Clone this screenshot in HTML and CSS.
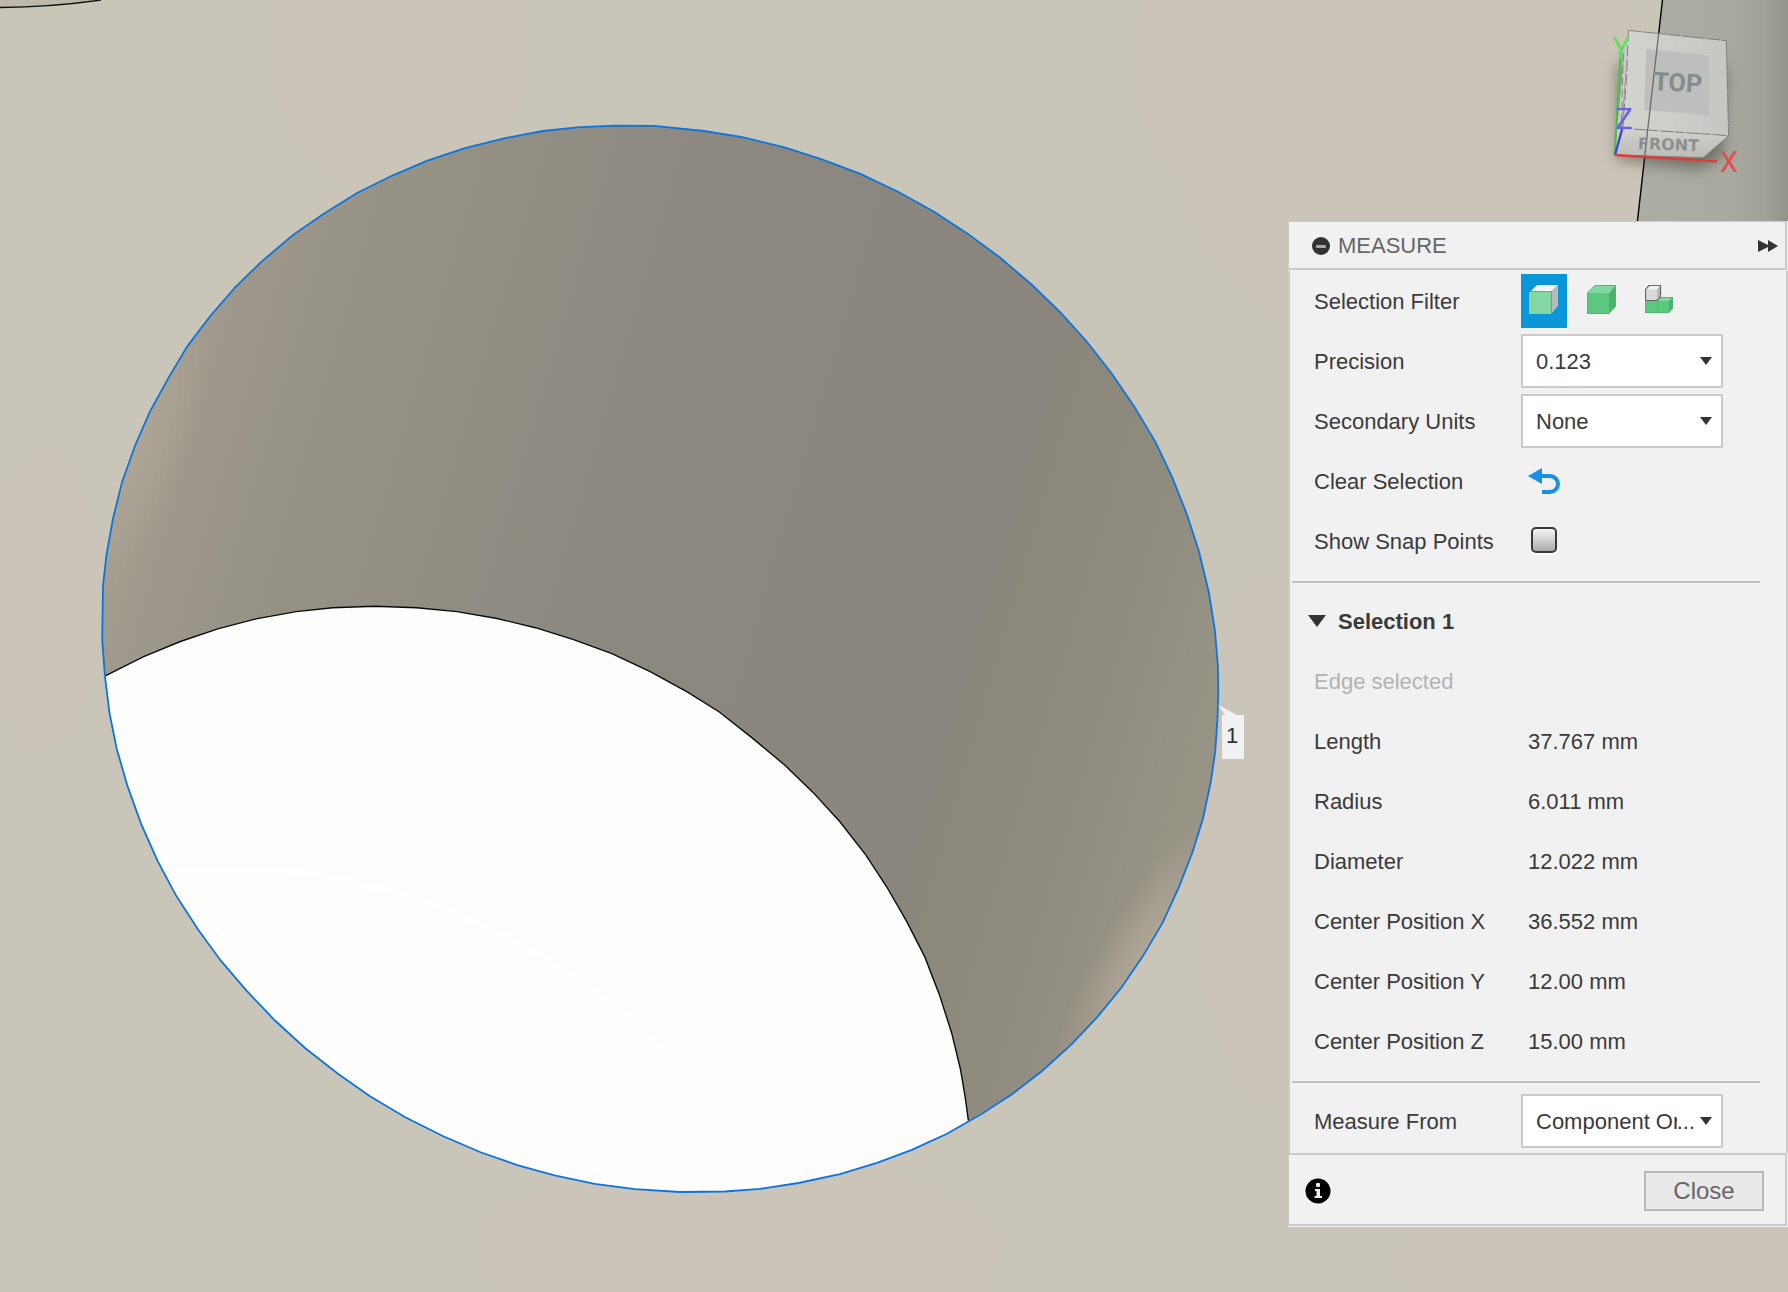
FILE: index.html
```html
<!DOCTYPE html>
<html lang="en">
<head>
<meta charset="utf-8">
<meta name="viewport" content="width=device-width, initial-scale=1">
<title>Measure</title>
<link rel="stylesheet" href="styles.css">
</head>
<body>
<main class="viewport">
  <svg class="scene" viewBox="0 0 1788 1292" preserveAspectRatio="xMaxYMin slice" role="img" aria-label="Model view with the selected hole edge">
    <defs>
      <linearGradient id="shade" gradientUnits="userSpaceOnUse" x1="250" y1="70" x2="1304" y2="377">
        <stop offset="0" stop-color="#a39d8f"/>
        <stop offset=".05" stop-color="#9d988b"/>
        <stop offset=".13" stop-color="#979386"/>
        <stop offset=".26" stop-color="#928e83"/>
        <stop offset=".42" stop-color="#8d8981"/>
        <stop offset=".6" stop-color="#8b877e"/>
        <stop offset=".78" stop-color="#8b867d"/>
        <stop offset=".82" stop-color="#8c887b"/>
        <stop offset=".92" stop-color="#908c7f"/>
        <stop offset="1" stop-color="#979385"/>
      </linearGradient>
      <linearGradient id="sideFace" x1="0" y1="0" x2="1" y2="0">
        <stop offset="0" stop-color="#acada4"/>
        <stop offset=".6" stop-color="#a9aaa1"/>
        <stop offset=".85" stop-color="#a2a299"/>
        <stop offset="1" stop-color="#93938b"/>
      </linearGradient>
      <radialGradient id="warm">
        <stop offset="0" stop-color="#ccc4b8"/>
        <stop offset=".6" stop-color="#ccc4b8" stop-opacity=".9"/>
        <stop offset="1" stop-color="#ccc4b8" stop-opacity="0"/>
      </radialGradient>
      <radialGradient id="glow">
        <stop offset="0" stop-color="#b5a999"/>
        <stop offset="1" stop-color="#b5a999" stop-opacity="0"/>
      </radialGradient>
      <clipPath id="rimClip">
        <path d="M104.900 675.900L102.200 639.600L103 586L106.400 555.400L112.900 519L122.100 481.900L135.100 445.500L150.400 410.700L168.800 377.400L187.500 346.100L210.100 316.200L235.400 287.100L262.100 261.100L292.800 235.100L323.400 214L357 193L391.900 175.800L426.700 160.800L465 148.200L504 138.300L543 131L579.800 127.200L615.700 125.600L654 125.800L704 131L742.300 137.100L784.400 147.400L822.600 159.700L860.900 174.200L898 191.800L933.600 211.400L968 233.900L1000.600 258L1032.300 285.200L1059.900 312L1086.700 341.500L1111.500 373.200L1134.500 406.900L1155.500 442.100L1172 476.900L1186.500 513.300L1198.800 550.800L1208.700 591.700L1214.900 630L1217.900 666.300L1218.300 692L1217.500 718.900L1215.200 751.400L1211 780.900L1203 818.400L1192.300 852.800L1178.900 887.200L1162.400 923.200L1142.900 956.100L1121.500 987.500L1097 1017.400L1071.700 1044.100L1042.700 1070.500L1012 1094.300L968.400 1120.700L965 1095.800L960.400 1069L951.600 1032.700L939.300 994.400L924.800 956.900L906.800 921.700L886.500 886.500L865.900 855.100L839.900 821.800L813 792.400L784.400 764.800L751.800 737.600L719.300 712L687.600 692.100L650.200 671.700L611.900 653.700L573.600 639.600L535.400 627.700L497.100 618.500L456.900 611.600L416.700 607.800L374.700 606.300L332.600 607.800L296.200 611.600L256 618.900L217.800 628.800L180.300 641.500L143.100 656.800Z"/>
      </clipPath>
    </defs>

    <rect width="1788" height="1292" fill="#c9c5b8"/>
    <g fill="url(#warm)">
      <ellipse cx="400" cy="50" rx="150" ry="170"/>
      <ellipse cx="1240" cy="60" rx="120" ry="160"/>
      <ellipse cx="1440" cy="150" rx="300" ry="240"/>
      <ellipse cx="40" cy="600" rx="70" ry="170"/>
      <ellipse cx="1270" cy="840" rx="90" ry="300"/>
      <ellipse cx="740" cy="1250" rx="300" ry="110"/>
      <ellipse cx="1640" cy="1262" rx="280" ry="90"/>
    </g>

    <path d="M1662 0L1628 300H1788V0Z" fill="url(#sideFace)"/>
    <path d="M1662.500 0L1628.500 300" fill="none" stroke="#000" stroke-width="1.400"/>
    <path d="M0 7.500Q52 7 101 0H0Z" fill="#bdb8ab"/>
    <path d="M0 7.500Q52 7 101 0" fill="none" stroke="#111" stroke-width="1.400"/>

    <g clip-path="url(#rimClip)">
      <rect x="90" y="110" width="1140" height="1100" fill="url(#shade)"/>
      <ellipse cx="1146" cy="954" rx="46" ry="170" transform="rotate(31 1146 954)" fill="url(#glow)" opacity=".9"/>
      <ellipse cx="140" cy="450" rx="46" ry="170" transform="rotate(20 140 450)" fill="url(#glow)" opacity=".6"/>
    </g>

    <path fill="#fdfdfb" d="M105.300 675.900L143.100 656.800L180.300 641.500L217.800 628.800L256 618.900L296.200 611.600L332.600 607.800L374.700 606.300L416.700 607.800L456.900 611.600L497.100 618.500L535.400 627.700L573.600 639.600L611.900 653.700L650.200 671.700L687.600 692.100L719.300 712L751.800 737.600L784.400 764.800L813 792.400L839.900 821.800L865.900 855.100L886.500 886.500L906.800 921.700L924.800 956.900L939.300 994.400L951.600 1032.700L960.400 1069L965 1095.800L968.400 1120.700L947 1133.700L911.800 1149.800L877 1162.800L839.900 1174.200L798.500 1183L760.300 1188.800L725 1191.500L680 1192L634.900 1189.200L594.700 1183.800L554.500 1175.400L518.100 1165.400L479.900 1152L442.800 1136L405.300 1117.200L370 1096.200L338.300 1074L305 1048L274.400 1020L246.500 990.600L220.800 960.700L197.900 929.300L175.700 894.900L157.700 861.200L141.200 824.100L127.400 785.800L116.700 748.700L109.500 713.100Z"/>
    <path fill="#fffefd" d="M175.700 870Q330 850 500 930Q690 1030 770 1186L725 1191.500L680 1192L594.700 1183.800L518.100 1165.400L442.800 1136L370 1096.200L305 1048L246.500 990.600L197.900 929.300Z"/>
    <path fill="none" stroke="#0b0b0b" stroke-width="1.400" d="M105.300 675.900L143.100 656.800L180.300 641.500L217.800 628.800L256 618.900L296.200 611.600L332.600 607.800L374.700 606.300L416.700 607.800L456.900 611.600L497.100 618.500L535.400 627.700L573.600 639.600L611.900 653.700L650.200 671.700L687.600 692.100L719.300 712L751.800 737.600L784.400 764.800L813 792.400L839.900 821.800L865.900 855.100L886.500 886.500L906.800 921.700L924.800 956.900L939.300 994.400L951.600 1032.700L960.400 1069L965 1095.800L968.400 1120.700"/>

    <path fill="none" stroke="#0b74de" stroke-width="1.800" d="M104.900 675.900L102.200 639.600L103 586L106.400 555.400L112.900 519L122.100 481.900L135.100 445.500L150.400 410.700L168.800 377.400L187.500 346.100L210.100 316.200L235.400 287.100L262.100 261.100L292.800 235.100L323.400 214L357 193L391.900 175.800L426.700 160.800L465 148.200L504 138.300L543 131L579.800 127.200L615.700 125.600L654 125.800L704 131L742.300 137.100L784.400 147.400L822.600 159.700L860.900 174.200L898 191.800L933.600 211.400L968 233.900L1000.600 258L1032.300 285.200L1059.900 312L1086.700 341.500L1111.500 373.200L1134.500 406.900L1155.500 442.100L1172 476.900L1186.500 513.300L1198.800 550.800L1208.700 591.700L1214.900 630L1217.900 666.300L1218.300 692L1217.500 718.900L1215.200 751.400L1211 780.900L1203 818.400L1192.300 852.800L1178.900 887.200L1162.400 923.200L1142.900 956.100L1121.500 987.500L1097 1017.400L1071.700 1044.100L1042.700 1070.500L1012 1094.300L980.700 1114.500L947 1133.700L911.800 1149.800L877 1162.800L839.900 1174.200L798.500 1183L760.300 1188.800L725 1191.500L680 1192L634.900 1189.200L594.700 1183.800L554.500 1175.400L518.100 1165.400L479.900 1152L442.800 1136L405.300 1117.200L370 1096.200L338.300 1074L305 1048L274.400 1020L246.500 990.600L220.800 960.700L197.900 929.300L175.700 894.900L157.700 861.200L141.200 824.100L127.400 785.800L116.700 748.700L109.500 713.100Z"/>

    <path d="M1218 705L1239 716H1226Z" fill="#f1f1f1"/>
    <rect x="1222" y="715" width="22" height="44" fill="#f1f1f1"/>
    <text class="marker" x="1232" y="743" text-anchor="middle">1</text>
  </svg>

  <svg class="cube" viewBox="0 0 684 663" role="img" aria-label="View cube">
    <defs>
      <filter id="soft" x="-30%" y="-30%" width="160%" height="160%"><feGaussianBlur stdDeviation="20"/></filter>
      <linearGradient id="frontFace" x1="0" y1="0" x2="0" y2="1">
        <stop offset="0" stop-color="#d2d2ce"/>
        <stop offset="1" stop-color="#bcbcb6"/>
      </linearGradient>
      <linearGradient id="topFace" x1="0" y1="0" x2="1" y2="0">
        <stop offset="0" stop-color="#d3d3cf"/>
        <stop offset="1" stop-color="#c6c7c3"/>
      </linearGradient>
    </defs>
    <path d="M170 190L500 200L490 470L420 510L170 480Z" fill="#3c3c36" opacity=".5" filter="url(#soft)"/>
    <path d="M205 91L185 385L165 465L190 190Z" fill="#cdcdc8"/>
    <path d="M205 91L499 122L506 407L188 385Z" fill="url(#topFace)"/>
    <path d="M188 385L506 407L430 473L165 465Z" fill="url(#frontFace)"/>
    <path d="M259 148L447 166L449 346L253 330Z" fill="#bcbfbc"/>
    <path d="M296 100L254 470" fill="none" stroke="#6d6d6a" stroke-width="4"/>
    <g fill="none" stroke="#80817d" stroke-width="3">
      <path d="M205 91L499 122" stroke-dasharray="40 4 70 4"/>
      <path d="M499 122L506 407" stroke-dasharray="90 3 60 4"/>
      <path d="M188 385L506 407" stroke-dasharray="26 8 40 5"/>
      <path d="M506 407L430 473L165 465"/>
      <path d="M205 91L200 230L188 385" stroke-dasharray="34 10"/>
      <path d="M190 160L184 385" stroke-dasharray="24 12"/>
    </g>
    <text class="cube-top" x="352" y="274" text-anchor="middle" transform="rotate(3 352 274)">TOP</text>
    <text class="cube-front" x="325" y="450" text-anchor="middle" transform="rotate(2 325 450)">FRONT</text>
    <path d="M183 145L164 465" stroke="#45c04a" stroke-width="6"/>
    <path d="M187 385L165 465" stroke="#4444c8" stroke-width="7"/>
    <path d="M165 465L472 484" stroke="#df3b38" stroke-width="7"/>
    <text class="axis axis-y" x="183" y="174" text-anchor="middle">Y</text>
    <text class="axis axis-z" x="192" y="388" text-anchor="middle">Z</text>
    <text class="axis axis-x" x="507" y="517" text-anchor="middle">X</text>
  </svg>

  <section class="panel" aria-labelledby="panel-title">
    <header class="panel-head">
      <button class="icon-button" type="button" aria-label="Collapse">
        <svg width="20" height="20" viewBox="0 0 20 20"><circle cx="10" cy="10" r="9" fill="#333"/><rect x="5" y="9" width="10" height="3" rx="1" fill="#aaa"/></svg>
      </button>
      <h1 class="title" id="panel-title">MEASURE</h1>
      <button class="icon-button push" type="button" aria-label="Expand panel">
        <svg width="22" height="14" viewBox="0 0 22 14"><path d="M1 1L11 6V1L21 7L11 13V8L1 13Z" fill="#333"/></svg>
      </button>
    </header>

    <div class="panel-body">
      <div class="row">
        <span class="name" id="filter-label">Selection Filter</span>
        <div class="filters" role="group" aria-labelledby="filter-label">
          <button class="filter filter-on" type="button" aria-pressed="true" aria-label="Faces">
            <svg width="29" height="29" viewBox="0 0 29 29"><path d="M1 7L8 0H29L23 6H1Z" fill="#f4f4f4"/><path d="M23 28V6L29 0V21Z" fill="#bababa"/><path d="M0 7H22V29H0Z" fill="#84d9a2"/><path d="M.500 6.500H22.500V28.500" fill="none" stroke="#3fb0cf"/></svg>
          </button>
          <button class="filter" type="button" aria-pressed="false" aria-label="Bodies">
            <svg width="29" height="29" viewBox="0 0 29 29"><path d="M0 8L8 0H29L22 8Z" fill="#80d89f"/><path d="M22 8L29 0V21L22 29Z" fill="#47b36d"/><path d="M0 8H22V29H0Z" fill="#5bc77f"/><path d="M.500 28.500V8L8 .500H28.500V21L21.500 28.500Z" fill="none" stroke="#4cb873"/></svg>
          </button>
          <button class="filter" type="button" aria-pressed="false" aria-label="Components">
            <svg width="29" height="29" viewBox="0 0 29 29"><path d="M0 16H13L16 12H28V23L23 28H0Z" fill="#5bc77f"/><path d="M13 16L16 12.500H28L24 16Z" fill="#80d89f"/><path d="M24 16L28 12V23L24 28Z" fill="#47b36d"/><path d="M.500 16V27.500H23.500L27.500 23V12.500H16M12.500 16V28" fill="none" stroke="#4cb873"/><path d="M.500 15.500V4.500L4 .500H15.500V12L12 15.500Z" fill="#d9d9d9"/><path d="M1 4.500L4.500 1H15L12 4.500Z" fill="#f4f4f4"/><path d="M12 4.500L15 1V12L12 15Z" fill="#bdbdbd"/><path d="M.500 15.500V4.500L4 .500H15.500V12L12 15.500Z" fill="none" stroke="#666" stroke-width="1.200"/></svg>
          </button>
        </div>
      </div>
      <div class="row">
        <label class="name" for="precision">Precision</label>
        <div class="picker">
          <select class="select" id="precision"><option>0.123</option></select>
          <svg class="arrow" width="12" height="8" viewBox="0 0 12 8"><path d="M0 0H12L6 8Z" fill="#333"/></svg>
        </div>
      </div>
      <div class="row">
        <label class="name" for="units">Secondary Units</label>
        <div class="picker">
          <select class="select" id="units"><option>None</option></select>
          <svg class="arrow" width="12" height="8" viewBox="0 0 12 8"><path d="M0 0H12L6 8Z" fill="#333"/></svg>
        </div>
      </div>
      <div class="row">
        <span class="name" id="clear-label">Clear Selection</span>
        <button class="icon-button undo" type="button" aria-labelledby="clear-label">
          <svg width="32" height="26" viewBox="0 0 32 26"><path d="M0 8L14 0V16Z" fill="#1a8fe8"/><path d="M13 8H22A8 8 0 0 1 22 24H14" fill="none" stroke="#1a8fe8" stroke-width="4"/></svg>
        </button>
      </div>
      <div class="row">
        <label class="name" for="snap">Show Snap Points</label>
        <input class="tick" id="snap" type="checkbox">
      </div>

      <hr class="rule">

      <h2 class="group">
        <button class="group-toggle" type="button" aria-expanded="true">
          <svg width="18" height="12" viewBox="0 0 18 12"><path d="M0 0H18L9 12Z" fill="#333"/></svg>
          <span class="caption">Selection 1</span>
        </button>
      </h2>
      <p class="note">Edge selected</p>
      <table class="results">
        <tbody>
          <tr><th scope="row">Length</th><td>37.767 mm</td></tr>
          <tr><th scope="row">Radius</th><td>6.011 mm</td></tr>
          <tr><th scope="row">Diameter</th><td>12.022 mm</td></tr>
          <tr><th scope="row">Center Position X</th><td>36.552 mm</td></tr>
          <tr><th scope="row">Center Position Y</th><td>12.00 mm</td></tr>
          <tr><th scope="row">Center Position Z</th><td>15.00 mm</td></tr>
        </tbody>
      </table>

      <hr class="rule">

      <div class="row">
        <label class="name" for="origin">Measure From</label>
        <div class="picker">
          <select class="select" id="origin"><option>Component Origin</option></select>
          <span class="more" aria-hidden="true">...</span>
          <svg class="arrow" width="12" height="8" viewBox="0 0 12 8"><path d="M0 0H12L6 8Z" fill="#333"/></svg>
        </div>
      </div>
    </div>

    <footer class="panel-foot">
      <button class="icon-button" type="button" aria-label="Information">
        <svg width="26" height="26" viewBox="0 0 26 26"><circle cx="13" cy="13" r="12.500" fill="#000"/><rect x="11" y="5" width="4" height="4" rx="1" fill="#eee"/><path d="M10 11H15V18H17V20H9.500V18H11.500V13H10Z" fill="#eee"/></svg>
      </button>
      <button class="close" type="button">Close</button>
    </footer>
  </section>
</main>
</body>
</html>
```
FILE: styles.css
```css
* {
  box-sizing: border-box;
}

body {
  margin: 0;
  color: #3a3a3a;
  font-family: "Liberation Sans", Arial, sans-serif;
  font-size: 22px;
  line-height: 26px;
}

button,
select {
  margin: 0;
  padding: 0;
  border: 0;
  background: none;
  color: inherit;
  font: inherit;
}

svg {
  display: block;
}

.viewport {
  position: relative;
  min-height: 100vh;
  overflow: hidden;
  background: #c9c5b8;
}

.scene {
  position: absolute;
  inset: 0;
  width: 100%;
  height: 100%;
}

.marker {
  fill: #333;
  font-size: 22px;
}

/* View cube, pinned to the top right corner */
.cube {
  position: absolute;
  top: 0;
  right: 0;
  width: 228px;
  height: 221px;
}

.cube-top {
  fill: #858a8b;
  font: bold 76px Roboto, sans-serif;
}

.cube-front {
  fill: #8d8f8e;
  font: bold 48px "DejaVu Sans", sans-serif;
}

.axis {
  font: 88px Roboto, sans-serif;
}

.axis-x { fill: #e0504c; }
.axis-y { fill: #5fe05a; }
.axis-z { fill: #6464e6; }

/* Measure panel */
.panel {
  position: absolute;
  top: 221px;
  right: 0;
  width: 500px;
  background: #f1f1f1;
  border-bottom: 1px solid #f1f1f1;
}

.panel-head {
  display: flex;
  align-items: center;
  height: 49px;
  margin-right: 1px;
  padding: 2px 6px 0 22px;
  border: solid #cacaca;
  border-width: 1px 2px 2px 1px;
}

.icon-button {
  display: block;
  cursor: pointer;
}

.title {
  margin: 0 0 0 7px;
  color: #666;
  font-size: 22px;
  font-weight: 400;
}

.push {
  margin-left: auto;
}

.panel-body {
  margin-top: 1px;
  padding-bottom: 2px;
  border: solid #cacaca;
  border-width: 0 2px;
}

.row {
  display: flex;
  align-items: center;
  height: 60px;
  padding-left: 24px;
}

.name {
  width: 207px;
  padding-top: 2px;
}

.filters {
  display: flex;
  gap: 12px;
}

.filter {
  display: flex;
  align-items: flex-start;
  width: 46px;
  height: 54px;
  padding: 11px 0 0 8px;
}

.filter-on {
  background: #0a96d9;
}

.picker {
  position: relative;
  width: 202px;
}

.select {
  display: block;
  width: 100%;
  height: 54px;
  padding: 2px 36px 0 13px;
  border: 2px solid #cacaca;
  background: #fff;
  appearance: none;
}

.arrow {
  position: absolute;
  top: 23px;
  right: 11px;
  pointer-events: none;
}

.more {
  position: absolute;
  top: 15px;
  right: 28px;
  background: #fff;
  pointer-events: none;
}

.undo {
  margin-left: 7px;
}

.tick {
  width: 26px;
  height: 26px;
  margin: 0 0 2px 10px;
  border: 2px solid #3a3a3a;
  border-radius: 5px;
  background: linear-gradient(#f4f4f4, #ababab);
  box-shadow: 0 2px 1px #fff;
  appearance: none;
}

.rule {
  height: 2px;
  margin: 10px 26px 8px 2px;
  border: 0;
  background: #bfbfbf;
}

.group {
  margin: 0;
  font-size: 22px;
}

.group-toggle {
  display: flex;
  align-items: center;
  gap: 12px;
  height: 60px;
  padding-left: 18px;
}

.caption {
  padding-top: 2px;
}

.note {
  margin: 0;
  padding: 18px 24px 16px;
  color: #b3b3b3;
}

.results {
  width: 100%;
  border-collapse: collapse;
}

.results th,
.results td {
  height: 60px;
  padding: 2px 0 0;
  font-weight: 400;
  text-align: left;
}

.results th {
  width: 238px;
  padding-left: 24px;
}

.panel-foot {
  display: flex;
  justify-content: space-between;
  align-items: center;
  height: 73px;
  margin-right: 1px;
  padding: 3px 21px 0 16px;
  border: solid #cacaca;
  border-width: 2px 2px 2px 1px;
}

.close {
  width: 120px;
  height: 40px;
  border: 2px solid #b8b8b8;
  background: #e9e9e9;
  color: #666;
  font-size: 24px;
}
```
